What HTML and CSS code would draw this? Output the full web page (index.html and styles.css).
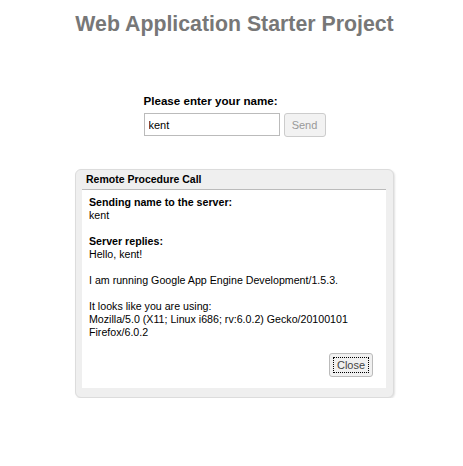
FILE: index.html
```html
<!DOCTYPE html>
<html>
<head>
<meta charset="utf-8">
<link rel="stylesheet" href="styles.css">
<title>Web Application Starter Project</title>
</head>
<body>
<div class="page">
  <h1 class="title">Web Application Starter Project</h1>
  <div class="form">
    <div class="form-label">Please enter your name:</div>
    <div class="form-row">
      <input class="name-field" type="text" value="kent">
      <button class="send-btn" disabled>Send</button>
    </div>
  </div>
  <div class="dialog">
    <div class="dialog-caption">Remote Procedure Call</div>
    <div class="dialog-content">
      <div class="bold">Sending name to the server:</div>
      <div>kent</div>
      <div class="gap"></div>
      <div class="bold">Server replies:</div>
      <div>Hello, kent!<br><br>I am running Google App Engine Development/1.5.3.<br><br>It looks like you are using:<br>Mozilla/5.0 (X11; Linux i686; rv:6.0.2) Gecko/20100101 Firefox/6.0.2</div>
      <div class="actions"><button class="close-btn">Close</button></div>
    </div>
  </div>
</div>
</body>
</html>
```
FILE: styles.css
```css
html, body { margin: 0; padding: 0; background: #fff; }
body { font-family: "Liberation Sans", Arial, sans-serif; font-size: 12px; color: #000; }
.page { padding: 0 0 0 6px; display: flex; flex-direction: column; align-items: center; }
.title { font-size: 21.3px; font-weight: bold; color: #777; margin: 12px 0 0; line-height: 24px; text-align: center; }
.form { margin-top: 58px; }
.form-label { font-weight: bold; font-size: 11.6px; line-height: 14px; margin-bottom: 5px; }
.form-row { display: flex; gap: 4px; align-items: flex-start; }
.name-field { width: 136px; height: 23px; box-sizing: border-box; border: 1px solid #bbb; padding: 0 4px; font: 11px "Liberation Sans", Arial, sans-serif; color: #000; margin: 0; }
.send-btn { width: 42px; height: 24px; box-sizing: border-box; border: 1px solid #ccc; border-radius: 3px; background: #f2f2f2; color: #999; font: 11px "Liberation Sans", Arial, sans-serif; margin: 0; padding: 0; }
.dialog { margin-top: 32px; width: 319px; box-sizing: border-box; border: 1px solid #dcdcdc; border-radius: 6px; background: #efefef; padding: 0 7px 9px 6px; box-shadow: 1px 1px 2px rgba(0,0,0,0.12); font-size: 10.5px; }
.dialog-caption { font-weight: bold; line-height: 14px; padding: 2px 4px 3px; border-bottom: 1px solid #bbb; }
.dialog-content { background: #fff; padding: 6px 7px 11px; line-height: 13px; font-size: 10.65px; }
.bold { font-weight: bold; }
.gap { height: 13px; }
.actions { display: flex; justify-content: flex-end; margin-top: 14px; padding-right: 6px; }
.close-btn { width: 44px; height: 24px; box-sizing: border-box; border: 1px solid #bbb; border-radius: 3px; background: #f0f0f0; color: #444; font: 11px "Liberation Sans", Arial, sans-serif; margin: 0; padding: 0; outline: 1px dotted #000; outline-offset: -5px; }
```
